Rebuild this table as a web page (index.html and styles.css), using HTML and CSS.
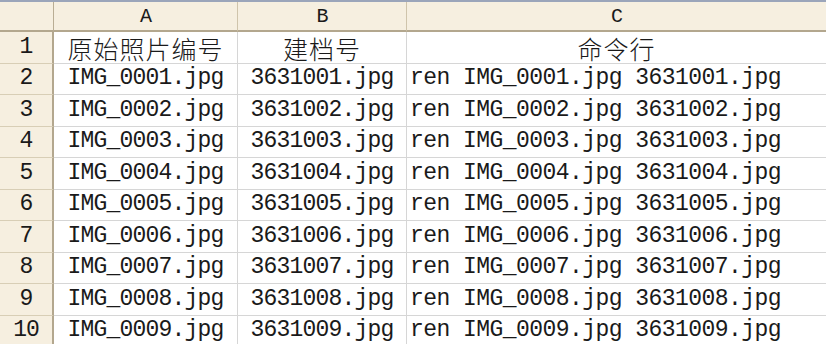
FILE: index.html
```html
<!DOCTYPE html>
<html>
<head>
<meta charset="utf-8">
<link rel="stylesheet" href="styles.css">
</head>
<body>
<div class="sheet">
  <div class="corner"></div>
  <div class="colhead">A</div>
  <div class="colhead">B</div>
  <div class="colhead last">C</div>

  <div class="rowhead">1</div>
  <div class="cell center cjk">原始照片编号</div>
  <div class="cell center cjk">建档号</div>
  <div class="cell center cjk last">命令行</div>

  <div class="rowhead">2</div>
  <div class="cell center">IMG_0001.jpg</div>
  <div class="cell center">3631001.jpg</div>
  <div class="cell last">ren IMG_0001.jpg 3631001.jpg</div>

  <div class="rowhead">3</div>
  <div class="cell center">IMG_0002.jpg</div>
  <div class="cell center">3631002.jpg</div>
  <div class="cell last">ren IMG_0002.jpg 3631002.jpg</div>

  <div class="rowhead">4</div>
  <div class="cell center">IMG_0003.jpg</div>
  <div class="cell center">3631003.jpg</div>
  <div class="cell last">ren IMG_0003.jpg 3631003.jpg</div>

  <div class="rowhead">5</div>
  <div class="cell center">IMG_0004.jpg</div>
  <div class="cell center">3631004.jpg</div>
  <div class="cell last">ren IMG_0004.jpg 3631004.jpg</div>

  <div class="rowhead">6</div>
  <div class="cell center">IMG_0005.jpg</div>
  <div class="cell center">3631005.jpg</div>
  <div class="cell last">ren IMG_0005.jpg 3631005.jpg</div>

  <div class="rowhead">7</div>
  <div class="cell center">IMG_0006.jpg</div>
  <div class="cell center">3631006.jpg</div>
  <div class="cell last">ren IMG_0006.jpg 3631006.jpg</div>

  <div class="rowhead">8</div>
  <div class="cell center">IMG_0007.jpg</div>
  <div class="cell center">3631007.jpg</div>
  <div class="cell last">ren IMG_0007.jpg 3631007.jpg</div>

  <div class="rowhead">9</div>
  <div class="cell center">IMG_0008.jpg</div>
  <div class="cell center">3631008.jpg</div>
  <div class="cell last">ren IMG_0008.jpg 3631008.jpg</div>

  <div class="rowhead">10</div>
  <div class="cell center">IMG_0009.jpg</div>
  <div class="cell center">3631009.jpg</div>
  <div class="cell last">ren IMG_0009.jpg 3631009.jpg</div>
</div>
</body>
</html>
```
FILE: styles.css
```css
html, body {
  margin: 0;
  padding: 0;
  background: #ffffff;
  overflow: hidden;
}
.sheet {
  display: grid;
  grid-template-columns: 54px 184px 169px 1fr;
  grid-template-rows: 30px repeat(10, 31.5px);
  width: 826px;
  border-top: 2px solid #9ba5ba;
  font-family: "Liberation Mono", "Noto Sans CJK SC", monospace;
  color: #1a1a1a;
}
.corner, .colhead, .rowhead {
  background: #f6efe0;
  box-sizing: border-box;
  border-right: 1px solid #b9ad94;
  border-bottom: 1px solid #b9ad94;
}
.corner {
  border-bottom: 2px solid #b3a78e;
}
.colhead {
  display: flex;
  align-items: center;
  justify-content: center;
  font-size: 20px;
  letter-spacing: -1px;
  border-right-color: #cfc4ab;
  border-bottom: 2px solid #b3a78e;
  padding-top: 1px;
}
.colhead.last { border-right: none; }
.rowhead {
  display: flex;
  align-items: flex-end;
  justify-content: center;
  font-size: 23px;
  letter-spacing: -1px;
  line-height: 1;
  padding-bottom: 4px;
  border-right: 2px solid #b3a78e;
  border-bottom-color: #d8ceb6;
}
.cell {
  display: flex;
  align-items: flex-end;
  box-sizing: border-box;
  border-right: 1px solid #d6d6d6;
  border-bottom: 1px solid #d6d6d6;
  font-size: 23px;
  letter-spacing: -0.8px;
  line-height: 1;
  padding: 0 0 4px 3px;
  white-space: nowrap;
}
.cell.center {
  justify-content: center;
  padding-left: 0;
}
.cell.last {
  border-right: none;
  letter-spacing: -0.55px;
}
.cjk {
  font-family: "Noto Sans CJK SC", sans-serif;
  font-size: 25px;
  font-weight: 300;
  line-height: 28px;
  letter-spacing: 1px;
  padding-bottom: 1px;
}
.cell.last.cjk {
  letter-spacing: 1px;
}
```
